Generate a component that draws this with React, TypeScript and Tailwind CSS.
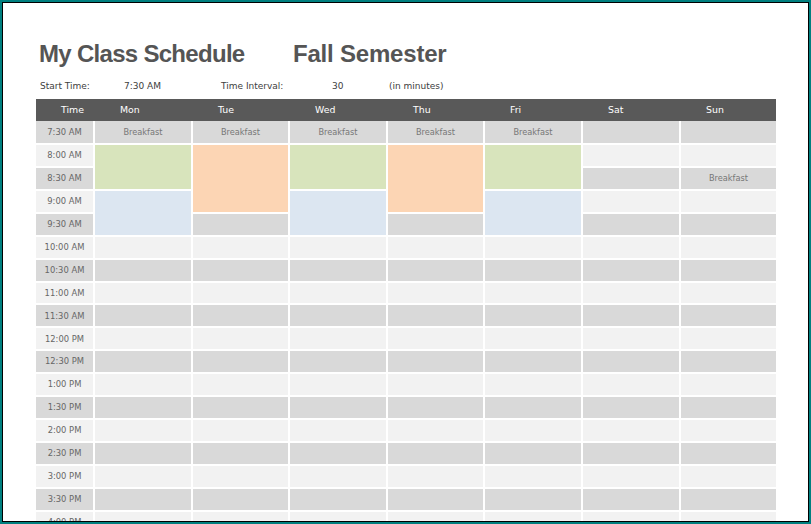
import React from 'react';

const DAYS = ['Mon', 'Tue', 'Wed', 'Thu', 'Fri', 'Sat', 'Sun'];

type Block = { start: number; span: number; tone: 'green' | 'blue' | 'orange' | 'row'; label?: string };

const monLike: Block[] = [
  { start: 0, span: 1, tone: 'row', label: 'Breakfast' },
  { start: 1, span: 2, tone: 'green' },
  { start: 3, span: 2, tone: 'blue' },
];
const tueLike: Block[] = [
  { start: 0, span: 1, tone: 'row', label: 'Breakfast' },
  { start: 1, span: 3, tone: 'orange' },
];

const SCHEDULE: Block[][] = [
  monLike,
  tueLike,
  monLike,
  tueLike,
  monLike,
  [],
  [{ start: 2, span: 1, tone: 'row', label: 'Breakfast' }],
];

function buildTimes(count: number) {
  const out: string[] = [];
  let mins = 7 * 60 + 30;
  for (let i = 0; i < count; i++) {
    const h = Math.floor(mins / 60);
    const m = mins % 60;
    const suffix = h >= 12 ? 'PM' : 'AM';
    const h12 = h > 12 ? h - 12 : h;
    out.push(`${h12}:${m === 0 ? '00' : '30'} ${suffix}`);
    mins += 30;
  }
  return out;
}

const TIMES = buildTimes(20);

const rowBg = (r: number) => (r % 2 === 0 ? 'bg-[#d9d9d9]' : 'bg-[#f2f2f2]');

const toneBg: Record<string, string> = {
  green: 'bg-[#d8e4bc]',
  blue: 'bg-[#dce6f1]',
  orange: 'bg-[#fcd5b4]',
};

function DayCells({ day, col }: { day: Block[]; col: number }) {
  const cells: React.ReactNode[] = [];
  let r = 0;
  while (r < TIMES.length) {
    const b = day.find((x) => x.start === r);
    const span = b ? b.span : 1;
    const bg = b && b.tone !== 'row' ? toneBg[b.tone] : rowBg(r);
    cells.push(
      <div
        key={r}
        className={`${bg} flex items-center justify-center text-[8.2px] text-[#777777]`}
        style={{ gridColumn: col, gridRow: `${r + 1} / span ${span}` }}
      >
        {b?.label}
      </div>
    );
    r += span;
  }
  return <>{cells}</>;
}

export default function App() {
  return (
    <div className="w-[811px] h-[524px] bg-[#007f7f] p-[2px]" style={{ fontFamily: '"DejaVu Sans", Tahoma, sans-serif' }}>
      <div className="h-full border border-black bg-white overflow-hidden pl-[33px]">
        <div className="mt-[37px] flex text-[24px] leading-[28px] font-bold text-[#555555] font-['Liberation_Sans',Arial,sans-serif]">
          <span className="w-[257px] pl-[3px] tracking-[-0.7px]">My Class Schedule</span>
          <span className="tracking-[-0.2px]">Fall Semester</span>
        </div>

        <div className="mt-[12px] flex h-[14px] items-center text-[9px] text-[#404040] pl-[4px]">
          <span className="w-[84px]">Start Time:</span>
          <span className="w-[97px]">7:30 AM</span>
          <span className="w-[111px]">Time Interval:</span>
          <span className="w-[57px]">30</span>
          <span>(in minutes)</span>
        </div>

        <div className="mt-[5px] w-[740px]">
          <div className="grid h-[22px] grid-cols-[57px_96px_95px_96px_95px_96px_96px_95px] gap-x-[2px] bg-[#595959] text-[9.4px] text-white">
            <div className="flex items-center pl-[25px]">Time</div>
            {DAYS.map((d) => (
              <div key={d} className="flex items-center pl-[25px]">{d}</div>
            ))}
          </div>

          <div className="grid grid-cols-[57px_96px_95px_96px_95px_96px_96px_95px] grid-rows-[22px_repeat(19,20.93px)] gap-x-[2px] gap-y-[2px]">
            {TIMES.map((t, i) => (
              <div
                key={t}
                className={`${rowBg(i)} flex items-center justify-center text-[8.4px] text-[#666666]`}
                style={{ gridColumn: 1, gridRow: i + 1 }}
              >
                {t}
              </div>
            ))}
            {SCHEDULE.map((day, i) => (
              <DayCells key={i} day={day} col={i + 2} />
            ))}
          </div>
        </div>
      </div>
    </div>
  );
}
